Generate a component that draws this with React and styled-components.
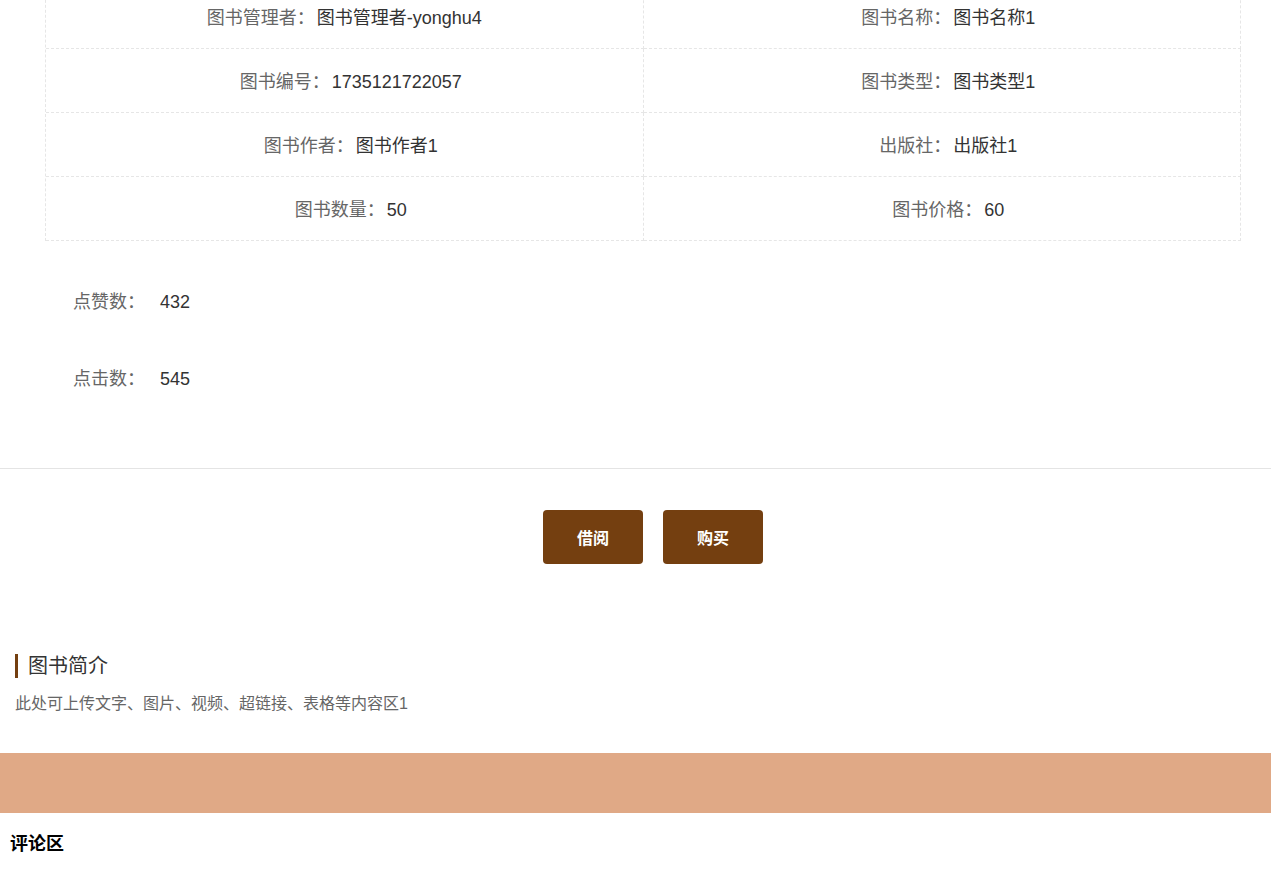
import React from "react";
import styled, { createGlobalStyle } from "styled-components";

const GlobalStyle = createGlobalStyle`
  html, body {
    margin: 0;
    padding: 0;
    background: #ffffff;
    font-family: "Liberation Sans", Arial, "Noto Sans CJK SC", sans-serif;
    color: #333;
    overflow: hidden;
  }
  * { box-sizing: border-box; }
`;

const Page = styled.div`
  width: 100%;
  display: flex;
  flex-direction: column;
`;

const DetailSection = styled.section`
  margin-top: -15px;
  padding: 0 30px 0 45px;
`;

const InfoGrid = styled.div`
  display: grid;
  grid-template-columns: 1fr 1fr;
  border-left: 1px dashed #e6e6e6;
`;

const InfoCell = styled.div`
  height: 64px;
  padding-top: 3px;
  line-height: 60px;
  text-align: center;
  padding-left: ${(p) => (p.$wide ? "0" : "13px")};
  border-right: 1px dashed #e6e6e6;
  border-bottom: 1px dashed #e6e6e6;
  font-size: 18px;
  white-space: nowrap;
`;

const Label = styled.span`
  color: #666;
`;

const Value = styled.span`
  color: #333;
  margin-left: 2px;
`;

const StatList = styled.div`
  margin-top: 41px;
  padding-left: 28px;
  display: flex;
  flex-direction: column;
  gap: 37px;
`;

const StatRow = styled.div`
  height: 40px;
  line-height: 40px;
  display: flex;
  align-items: baseline;
  font-size: 18px;
`;

const StatLabel = styled.span`
  width: 87px;
  color: #666;
`;

const StatValue = styled.span`
  color: #333;
`;

const Divider = styled.hr`
  margin: 69px 0 0;
  border: 0;
  height: 1px;
  background: #e4e4e4;
`;

const ActionBar = styled.div`
  margin-top: 41px;
  padding-left: 35px;
  display: flex;
  justify-content: center;
  gap: 20px;
`;

const ActionButton = styled.button`
  width: 100px;
  height: 54px;
  border: 0;
  border-radius: 4px;
  background: #743f10;
  color: #fff;
  font-family: inherit;
  font-size: 16px;
  font-weight: bold;
  cursor: pointer;
`;

const IntroSection = styled.section`
  margin-top: 90px;
  padding: 0 15px;
`;

const IntroTitle = styled.h3`
  margin: 0;
  height: 24px;
  line-height: 24px;
  padding-left: 10px;
  border-left: 3px solid #743f10;
  font-size: 20px;
  font-weight: normal;
  color: #333;
`;

const IntroText = styled.p`
  margin: 14px 0 0;
  line-height: 24px;
  font-size: 16px;
  color: #666;
`;

const Band = styled.div`
  margin-top: 37px;
  height: 60px;
  background: #e0a986;
`;

const CommentTitle = styled.h4`
  margin: 19px 0 0;
  padding-left: 10px;
  line-height: 24px;
  font-size: 18px;
  font-weight: bold;
  color: #000;
`;

const info = [
  ["图书管理者：", "图书管理者-yonghu4", true],
  ["图书名称：", "图书名称1"],
  ["图书编号：", "1735121722057"],
  ["图书类型：", "图书类型1"],
  ["图书作者：", "图书作者1"],
  ["出版社：", "出版社1"],
  ["图书数量：", "50"],
  ["图书价格：", "60"],
];

const stats = [
  ["点赞数：", "432"],
  ["点击数：", "545"],
];

export default function App() {
  return (
    <Page>
      <GlobalStyle />
      <DetailSection>
        <InfoGrid>
          {info.map(([label, value, wide]) => (
            <InfoCell key={label} $wide={wide}>
              <Label>{label}</Label>
              <Value>{value}</Value>
            </InfoCell>
          ))}
        </InfoGrid>
        <StatList>
          {stats.map(([label, value]) => (
            <StatRow key={label}>
              <StatLabel>{label}</StatLabel>
              <StatValue>{value}</StatValue>
            </StatRow>
          ))}
        </StatList>
      </DetailSection>
      <Divider />
      <ActionBar>
        <ActionButton>借阅</ActionButton>
        <ActionButton>购买</ActionButton>
      </ActionBar>
      <IntroSection>
        <IntroTitle>图书简介</IntroTitle>
        <IntroText>此处可上传文字、图片、视频、超链接、表格等内容区1</IntroText>
      </IntroSection>
      <Band />
      <CommentTitle>评论区</CommentTitle>
    </Page>
  );
}
